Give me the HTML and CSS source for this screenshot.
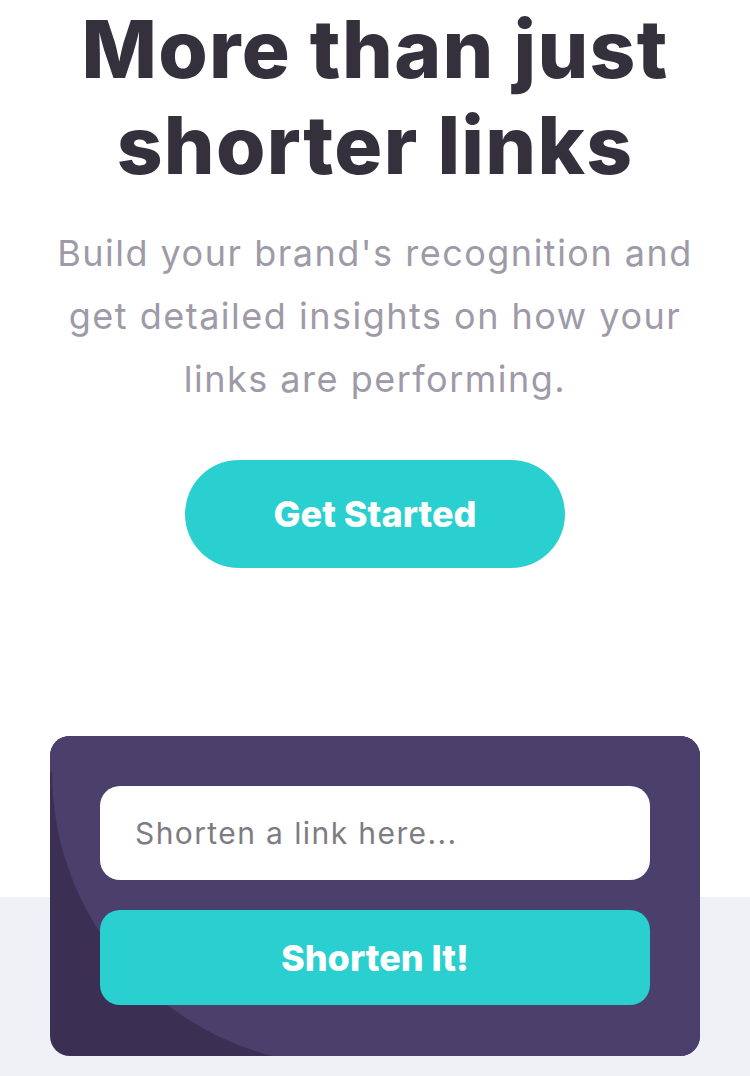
FILE: index.html
```html
<!DOCTYPE html>
<html lang="en">
<head>
<meta charset="utf-8">
<title>Shortly</title>
<link rel="stylesheet" href="styles.css">
</head>
<body>
<main class="hero">
  <h1 class="hero-title">More than just<br>shorter links</h1>
  <p class="hero-text">Build your brand's recognition and<br>get detailed insights on how your<br>links are performing.</p>
  <a class="btn-start" href="#">Get Started</a>
  <div class="shorten-wrap">
    <form class="shorten-card">
      <svg class="shorten-bg" width="650" height="320" viewBox="0 0 650 320" aria-hidden="true">
        <rect width="650" height="320" fill="#3b3054"/>
        <circle cx="295" cy="36" r="293" fill="#4b3f6b"/>
        <rect x="295" y="0" width="355" height="320" fill="#4b3f6b"/>
        <rect x="0" y="0" width="650" height="36" fill="#4b3f6b"/>
      </svg>
      <input class="shorten-input" type="text" placeholder="Shorten a link here...">
      <button class="shorten-btn" type="button">Shorten It!</button>
    </form>
  </div>
</main>
<section class="stats"></section>
</body>
</html>
```
FILE: styles.css
```css
* { box-sizing: border-box; }
html, body { margin: 0; padding: 0; }
body {
  background: #ffffff;
  font-family: Inter, "Open Sans", sans-serif;
  overflow: hidden;
}
.hero {
  display: flex;
  flex-direction: column;
  align-items: center;
  text-align: center;
  background: #ffffff;
}
.hero-title {
  margin: 0;
  padding-top: 1px;
  font-size: 80px;
  line-height: 96px;
  font-weight: 800;
  color: #34313d;
  letter-spacing: 1.3px;
}
.hero-text {
  margin: 29px 0 0;
  font-size: 36px;
  line-height: 63px;
  font-weight: 400;
  color: #9e9aa7;
  letter-spacing: 1.5px;
}
.btn-start {
  margin-top: 49px;
  width: 380px;
  height: 108px;
  border-radius: 54px;
  background: #2acfcf;
  color: #ffffff;
  font-size: 36px;
  font-weight: 800;
  letter-spacing: 0px;
  text-decoration: none;
  display: flex;
  align-items: center;
  justify-content: center;
}
.shorten-wrap {
  padding-top: 168px;
  width: 100%;
  display: flex;
  justify-content: center;
}
.shorten-card {
  position: relative;
  z-index: 1;
  width: 650px;
  height: 320px;
  margin: 0 0 -159px;
  padding: 50px;
  border-radius: 20px;
  overflow: hidden;
  display: flex;
  flex-direction: column;
  gap: 30px;
}
.shorten-bg {
  position: absolute;
  left: 0;
  top: 0;
  z-index: -1;
}
.shorten-input {
  height: 94px;
  width: 100%;
  border: none;
  border-radius: 20px;
  padding: 0 35px;
  background: #ffffff;
  font-family: inherit;
  font-size: 30px;
  letter-spacing: 1.4px;
  color: #34313d;
  outline: none;
}
.shorten-input::placeholder { color: #7e7c82; }
.shorten-btn {
  height: 95px;
  width: 100%;
  border: none;
  border-radius: 20px;
  background: #2acfcf;
  color: #ffffff;
  font-family: inherit;
  font-size: 36px;
  font-weight: 800;
  letter-spacing: 0px;
}
.stats {
  background: #eff1f7;
  height: 179px;
}
```
